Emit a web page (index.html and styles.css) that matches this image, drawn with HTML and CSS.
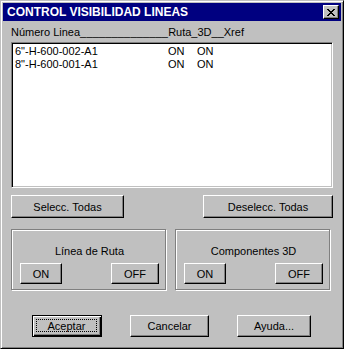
FILE: index.html
```
<!DOCTYPE html>
<html lang="es">
<head>
    <meta charset="UTF-8">
    <title>Control Visibilidad Lineas</title>
    <link rel="stylesheet" href="styles.css">
</head>
<body>
    <div class="window">
        <div class="titlebar">
            <span class="title">CONTROL VISIBILIDAD LINEAS</span>
            <button class="close">
                <svg width="8" height="7" viewBox="0 0 8 7">
                    <path d="M0 0h2v1h1v1h2v-1h1v-1h2v1h-1v1h-1v1h-1v1h1v1h1v1h1v1h-2v-1h-1v-1h-2v1h-1v1h-2v-1h1v-1h1v-1h1v-1h-1v-1h-1v-1h-1z" fill="#000"/>
                </svg>
            </button>
        </div>
        <div class="content">
            <div class="header">Número Linea<span class="fill">______________</span>Ruta_3D__Xref</div>
            <div class="listbox">
                <div class="row"><span>6"-H-600-002-A1</span><span>ON</span><span>ON</span></div>
                <div class="row"><span>8"-H-600-001-A1</span><span>ON</span><span>ON</span></div>
            </div>
            <div class="select-row">
                <button class="btn btn-sel">Selecc. Todas</button>
                <button class="btn btn-desel">Deselecc. Todas</button>
            </div>
            <div class="groups">
                <div class="group">
                    <div class="group-label">Línea de Ruta</div>
                    <div class="group-buttons">
                        <button class="btn btn-on">ON</button>
                        <button class="btn btn-off">OFF</button>
                    </div>
                </div>
                <div class="group">
                    <div class="group-label">Componentes 3D</div>
                    <div class="group-buttons">
                        <button class="btn btn-on">ON</button>
                        <button class="btn btn-off">OFF</button>
                    </div>
                </div>
            </div>
            <div class="footer">
                <button class="btn btn-default btn-aceptar"><span class="focus">Aceptar</span></button>
                <button class="btn btn-cancelar">Cancelar</button>
                <button class="btn btn-ayuda">Ayuda...</button>
            </div>
        </div>
    </div>
</body>
</html>
```
FILE: styles.css
```
body {
    margin: 0;
    background: #c0c0c0;
    font-family: "Liberation Sans", Arial, sans-serif;
    font-size: 11px;
    color: #000;
}
.window {
    width: 344px;
    height: 349px;
    box-sizing: border-box;
    background: #c0c0c0;
    border: 1px solid;
    border-color: #c0c0c0 #000 #000 #c0c0c0;
    box-shadow: inset 1px 1px #fff, inset -1px -1px #808080;
    padding: 2px;
}
.titlebar {
    height: 18px;
    background: #000080;
    color: #fff;
    display: flex;
    align-items: center;
    justify-content: space-between;
    padding: 0 2px 0 4px;
}
.title {
    font-weight: bold;
    font-size: 12px;
    line-height: 18px;
}
.close {
    width: 16px;
    height: 14px;
    padding: 0;
    background: #c0c0c0;
    border: 1px solid;
    border-color: #fff #000 #000 #fff;
    box-shadow: inset -1px -1px #808080;
    display: flex;
    align-items: center;
    justify-content: center;
}
.content {
    padding: 5px 8px 0 8px;
}
.header {
    line-height: 13px;
    white-space: nowrap;
}
.fill {
    letter-spacing: 0.17px;
}
.listbox {
    margin-top: 3px;
    height: 146px;
    box-sizing: border-box;
    background: #fff;
    border: 1px solid;
    border-color: #808080 #fff #fff #808080;
    box-shadow: inset 1px 1px #000, inset -1px -1px #c0c0c0;
    padding: 2px 3px;
}
.row {
    display: grid;
    grid-template-columns: 153px 29px auto;
    line-height: 13px;
}
.btn {
    font-family: "Liberation Sans", Arial, sans-serif;
    font-size: 11px;
    color: #000;
    background: #c0c0c0;
    border: 1px solid;
    border-color: #fff #000 #000 #fff;
    box-shadow: inset -1px -1px #808080;
    padding: 0;
    box-sizing: border-box;
}
.select-row {
    margin-top: 7px;
    display: flex;
    justify-content: space-between;
}
.select-row .btn {
    height: 23px;
}
.btn-sel {
    width: 113px;
}
.btn-desel {
    width: 130px;
}
.groups {
    margin-top: 11px;
    display: flex;
    gap: 9px;
}
.group {
    width: 155px;
    height: 61px;
    box-sizing: border-box;
    border: 1px solid #808080;
    box-shadow: inset 1px 1px #fff, 1px 1px #fff;
    padding: 15px 6px 0 8px;
}
.group-label {
    text-align: center;
    line-height: 13px;
}
.group-buttons {
    margin-top: 5px;
    display: flex;
    justify-content: space-between;
}
.group-buttons .btn {
    height: 21px;
}
.btn-on {
    width: 42px;
}
.btn-off {
    width: 48px;
}
.footer {
    margin-top: 25px;
    padding-left: 21px;
    display: flex;
    gap: 28px;
}
.footer .btn {
    height: 22px;
}
.btn-aceptar {
    width: 70px;
}
.btn-cancelar {
    width: 79px;
}
.btn-ayuda {
    width: 74px;
}
.btn-default {
    border: 1px solid #000;
    box-shadow: inset 1px 1px #fff, inset -1px -1px #000, inset -2px -2px #808080;
    padding: 3px 4px 4px 3px;
    display: flex;
}
.focus {
    flex: 1;
    border: 1px dotted #000;
    display: flex;
    align-items: center;
    justify-content: center;
}
```
